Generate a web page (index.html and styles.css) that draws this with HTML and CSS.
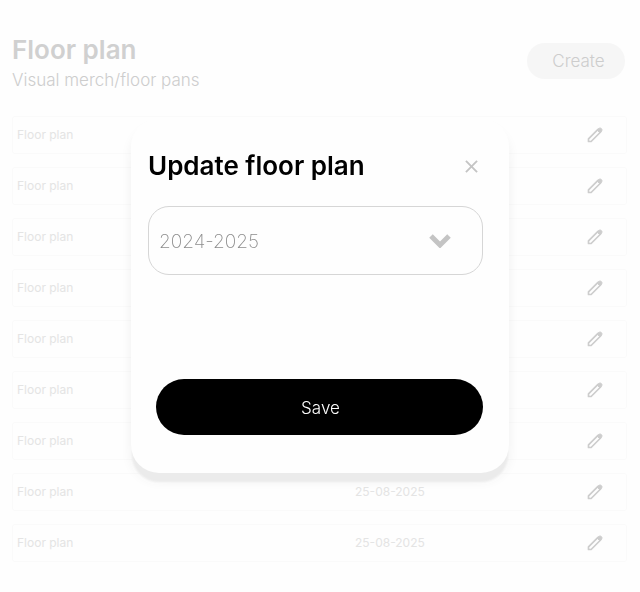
FILE: index.html
```html
<!DOCTYPE html>
<html lang="en">
<head>
<meta charset="utf-8">
<meta name="viewport" content="width=device-width, initial-scale=1">
<title>Floor plan</title>
<link rel="stylesheet" href="styles.css">
</head>
<body>
<svg class="sprite" aria-hidden="true">
  <symbol id="pencil" viewBox="0 0 16 16">
    <path d="M1.500 14.500v-2.600L11 2.400 13.600 5 4.100 14.500z" fill="none" stroke="currentColor" stroke-width="1.700" stroke-linejoin="round"/>
    <path d="M10 3l1.800-1.600q1.400-1 2.600.2t.2 2.600L13 6z" fill="currentColor" stroke="currentColor" stroke-linejoin="round"/>
  </symbol>
</svg>
<main class="page">
  <header class="page-header">
    <div>
      <h1 class="page-title">Floor plan</h1>
      <p class="page-subtitle">Visual merch/floor pans</p>
    </div>
    <button class="create" type="button">Create</button>
  </header>
  <table class="plans">
    <tbody>
      <tr><td>Floor plan</td><td>25-08-2025</td><td><button class="edit" type="button" aria-label="Edit"><svg><use href="#pencil"/></svg></button></td></tr>
      <tr><td>Floor plan</td><td>25-08-2025</td><td><button class="edit" type="button" aria-label="Edit"><svg><use href="#pencil"/></svg></button></td></tr>
      <tr><td>Floor plan</td><td>25-08-2025</td><td><button class="edit" type="button" aria-label="Edit"><svg><use href="#pencil"/></svg></button></td></tr>
      <tr><td>Floor plan</td><td>25-08-2025</td><td><button class="edit" type="button" aria-label="Edit"><svg><use href="#pencil"/></svg></button></td></tr>
      <tr><td>Floor plan</td><td>25-08-2025</td><td><button class="edit" type="button" aria-label="Edit"><svg><use href="#pencil"/></svg></button></td></tr>
      <tr><td>Floor plan</td><td>25-08-2025</td><td><button class="edit" type="button" aria-label="Edit"><svg><use href="#pencil"/></svg></button></td></tr>
      <tr><td>Floor plan</td><td>25-08-2025</td><td><button class="edit" type="button" aria-label="Edit"><svg><use href="#pencil"/></svg></button></td></tr>
      <tr><td>Floor plan</td><td>25-08-2025</td><td><button class="edit" type="button" aria-label="Edit"><svg><use href="#pencil"/></svg></button></td></tr>
      <tr><td>Floor plan</td><td>25-08-2025</td><td><button class="edit" type="button" aria-label="Edit"><svg><use href="#pencil"/></svg></button></td></tr>
    </tbody>
  </table>
</main>
<div class="overlay">
  <form class="modal" role="dialog" aria-modal="true" aria-labelledby="modal-title">
    <div class="modal-header">
      <h2 class="modal-title" id="modal-title">Update floor plan</h2>
      <button class="close" type="button" aria-label="Close">
        <svg viewBox="0 0 14 14"><path d="M1 1l12 12M13 1L1 13" fill="none" stroke="currentColor" stroke-width="2"/></svg>
      </button>
    </div>
    <div class="field">
      <select class="season" aria-label="Season"><option>2024-2025</option></select>
      <svg class="chevron" viewBox="0 0 22 14" aria-hidden="true"><path d="M2 2l9 9 9-9" fill="none" stroke="currentColor" stroke-width="5"/></svg>
    </div>
    <button class="save" type="submit">Save</button>
  </form>
</div>
</body>
</html>
```
FILE: styles.css
```css
* { box-sizing: border-box; }

body {
  margin: 0;
  background: #fefefe;
  font-family: Inter, "Liberation Sans", sans-serif;
}

button, select { font: inherit; }
h1, h2, p { margin: 0; }

.sprite { display: none; }

.page { padding: 34px 13px 0 12px; }

.page-header {
  display: flex;
  justify-content: space-between;
  align-items: center;
  padding-right: 2px;
}

.page-title {
  font-size: 26px;
  line-height: 32px;
  font-weight: 600;
  color: #d0d0d0;
}

.page-subtitle {
  font-size: 17px;
  line-height: 28px;
  font-weight: 300;
  color: #cdcdcd;
}

.create {
  width: 98px;
  height: 36px;
  margin-bottom: 6px;
  padding: 0 0 0 5px;
  border: 0;
  border-radius: 18px;
  background: #f6f6f6;
  color: #cdcdcd;
  font-size: 17px;
  font-weight: 300;
}

.plans {
  width: 100%;
  margin-top: 9px;
  border-collapse: separate;
  border-spacing: 0 13px;
  table-layout: fixed;
  font-size: 12px;
  line-height: 16px;
  color: #e4e4e4;
}

.plans td {
  height: 38px;
  padding: 0;
  border: solid #fafafa;
  border-width: 1px 0;
}

.plans td:first-child {
  padding-left: 4px;
  border-left-width: 1px;
  border-radius: 3px 0 0 3px;
}

.plans td:nth-child(2) { width: 232px; }

.plans td:last-child {
  width: 40px;
  border-right-width: 1px;
  border-radius: 0 3px 3px 0;
}

.edit {
  display: block;
  width: 16px;
  height: 16px;
  padding: 0;
  border: 0;
  background: none;
  color: #cdcdcd;
}

.edit svg, .close svg { display: block; width: 100%; height: 100%; }

.overlay {
  position: fixed;
  inset: 0;
  display: flex;
  align-items: center;
  justify-content: center;
  padding: 16px;
}

.modal {
  width: 100%;
  max-width: 378px;
  padding: 29px 26px 38px 17px;
  border-radius: 28px;
  background: #fefefe;
  box-shadow: 0 10px 2px -1px #ebebeb, 0 8px 12px rgba(0, 0, 0, 0.06);
}

.modal-header {
  display: flex;
  justify-content: space-between;
  align-items: center;
  padding-right: 5px;
}

.modal-title {
  font-size: 26px;
  line-height: 36px;
  font-weight: 600;
  color: #000;
}

.close {
  width: 13px;
  height: 13px;
  padding: 0;
  border: 0;
  background: none;
  color: #c4c4c4;
}

.field {
  display: grid;
  align-items: center;
  margin-top: 22px;
}

.field > * { grid-area: 1 / 1; }

.season {
  width: 100%;
  height: 69px;
  padding: 2px 60px 0 10px;
  border: 1px solid #d6d6d6;
  border-radius: 21px;
  background: transparent;
  color: #8c8c8c;
  font-size: 19px;
  font-weight: 200;
  appearance: none;
}

.chevron {
  justify-self: end;
  width: 22px;
  height: 14px;
  margin-right: 32px;
  color: #c4c4c4;
  pointer-events: none;
}

.save {
  display: block;
  width: calc(100% - 8px);
  height: 56px;
  margin: 104px 0 0 8px;
  padding: 2px 0 0 2px;
  border: 0;
  border-radius: 28px;
  background: #000;
  color: #fff;
  font-size: 17px;
  font-weight: 300;
}
```
